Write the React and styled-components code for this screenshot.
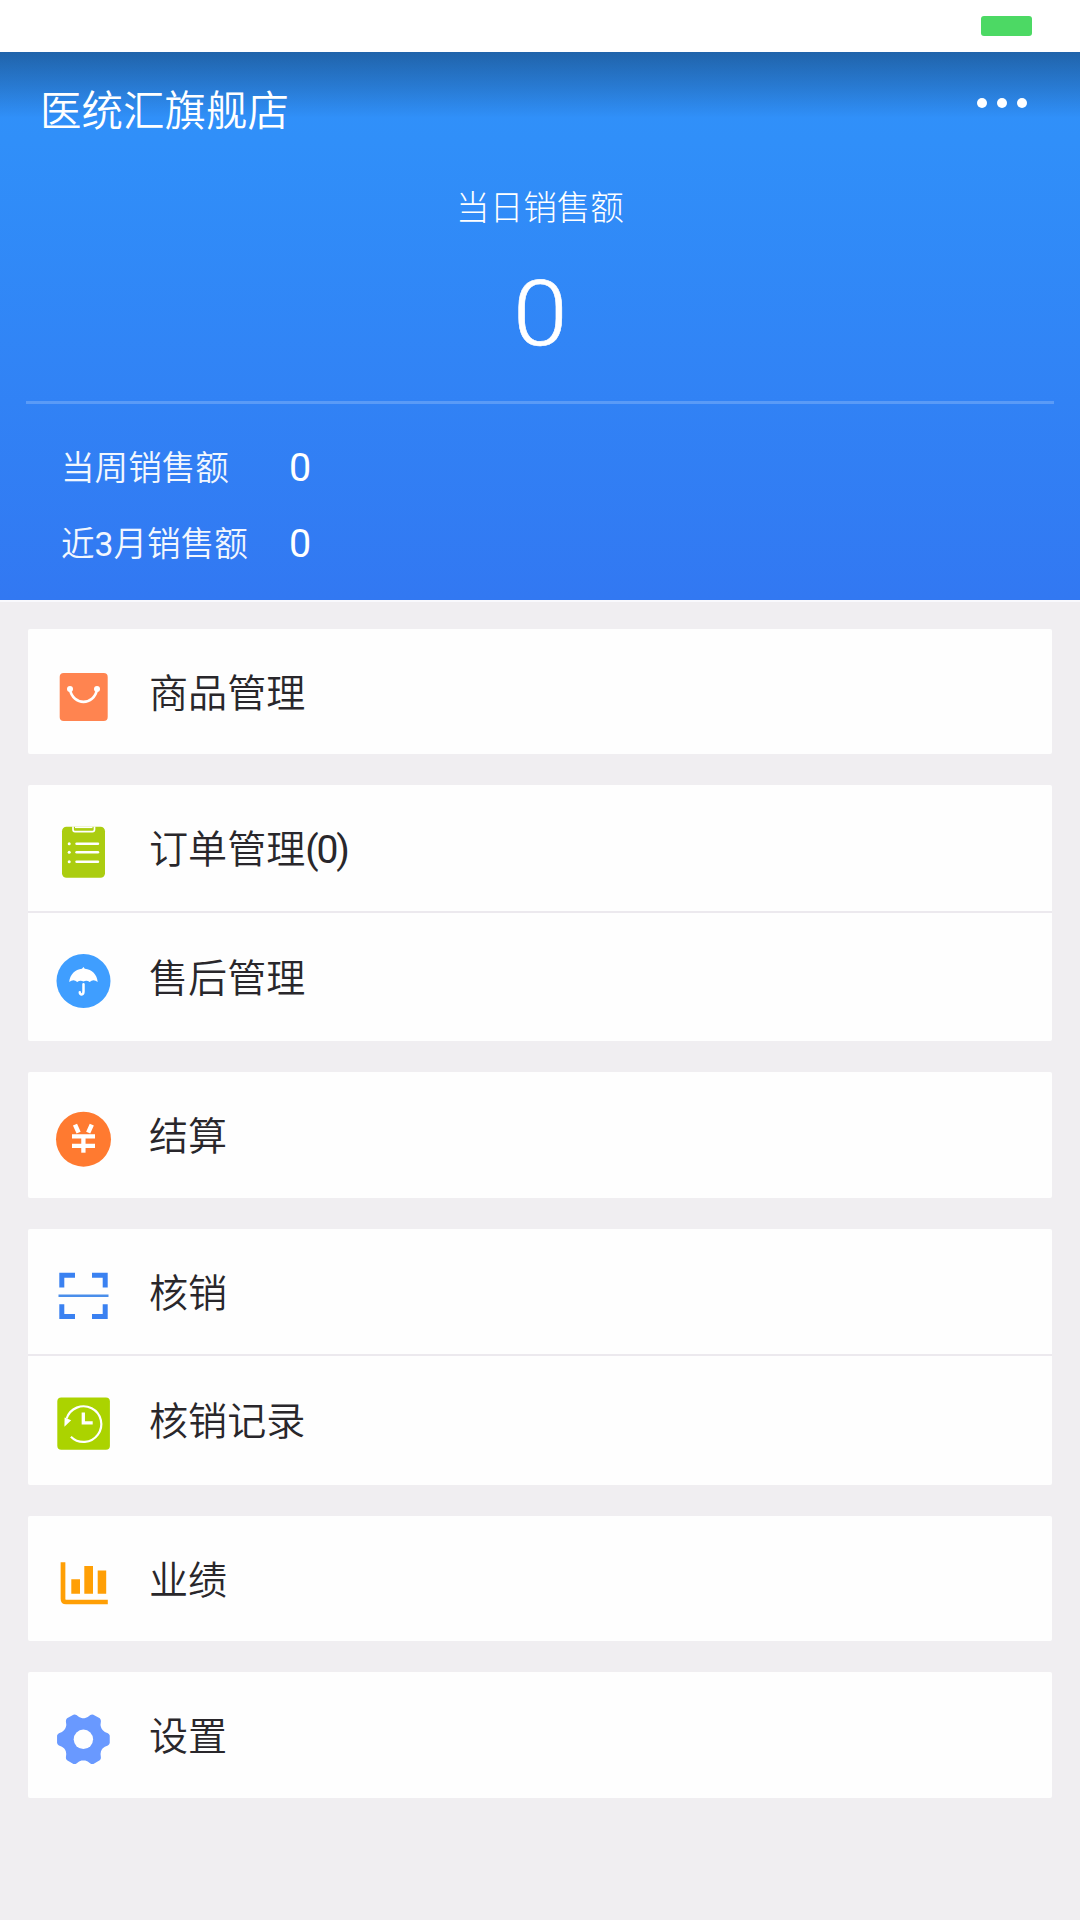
import { Fragment } from "react";
import { createGlobalStyle, styled } from "styled-components";

const GlobalStyle = createGlobalStyle`
  * {
    box-sizing: border-box;
  }
  body {
    margin: 0;
    background-color: #f0eef1;
    font-family: Roboto, "Noto Sans CJK SC", sans-serif;
  }
`;

const Page = styled.div`
  display: flex;
  flex-direction: column;
  width: 1080px;
  height: 1920px;
  overflow: hidden;
`;

const StatusBar = styled.div`
  display: flex;
  justify-content: flex-end;
  height: 52px;
  padding: 16px 48px 0 0;
  background-color: white;
`;

const Battery = styled.div`
  width: 51px;
  height: 20px;
  border-radius: 3px;
  background-color: #4cd964;
`;

const Header = styled.header`
  display: flex;
  flex-direction: column;
  height: 550px;
  color: white;
  border-bottom: 2px solid #f9f9fd;
  background: linear-gradient(
      to bottom,
      rgba(10, 35, 60, 0.42) 0px,
      rgba(10, 35, 60, 0.2) 36px,
      rgba(10, 35, 60, 0) 66px
    ),
    linear-gradient(to bottom, #3092fa 0px, #308ff9 90px, #3278f2 548px);
`;

const TopBar = styled.div`
  display: flex;
  justify-content: space-between;
  height: 118px;
  padding: 29px 53px 0 40px;
`;

const ShopName = styled.h1`
  margin: 0;
  font-size: 41.5px;
  line-height: 62px;
  font-weight: 350;
`;

const MoreButton = styled.div`
  display: flex;
  gap: 9.5px;
  padding-top: 17px;

  span {
    width: 10.4px;
    height: 10.4px;
    border-radius: 50%;
    background-color: white;
  }
`;

const Today = styled.div`
  display: flex;
  flex-direction: column;
  align-items: center;
  height: 234px;
  margin: 0 26px;
  padding-top: 14px;
  border-bottom: 3px solid rgba(255, 255, 255, 0.2);
`;

const TodayLabel = styled.span`
  font-size: 33.6px;
  line-height: 50px;
  font-weight: 300;
`;

const TodayValue = styled.strong`
  margin-top: 30px;
  font-size: 91px;
  line-height: 100px;
  font-weight: 300;
  transform: scaleX(1.08);
  -webkit-text-stroke: 0.6px white;
`;

const Stats = styled.div`
  display: grid;
  grid-template-columns: 228px auto;
  grid-auto-rows: 76px;
  align-items: center;
  padding: 26px 0 0 61px;
`;

const StatLabel = styled.span`
  padding-top: 2px;
  font-size: 33.6px;
  line-height: 50px;
  font-weight: 350;
  opacity: 0.94;
`;

const StatValue = styled.span`
  font-size: 39.5px;
  line-height: 50px;
`;

const Digits = styled.span`
  font-weight: 400;
  letter-spacing: ${(props) => props.$spacing || "0"};
`;

const Menu = styled.main`
  display: flex;
  flex-direction: column;
  gap: 31px;
  padding: 27px 28px 0;
`;

const Group = styled.div`
  display: flex;
  flex-direction: column;
  border-radius: 2px;
  background-color: #fefefe;
`;

const Row = styled.div`
  display: flex;
  gap: 38px;
  height: 125.4px;
  padding: 40px 27px 0;

  & + & {
    height: 130.6px;
    border-top: 2px solid #ece9ee;
    padding-top: 41px;
  }

  svg {
    flex: none;
    overflow: visible;
  }
`;

const RowText = styled.span`
  margin-top: -4px;
  color: #29272b;
  font-size: 39.1px;
  line-height: 58px;
  font-weight: 350;
`;

function Icon({ children }) {
  return (
    <svg width="56" height="56" viewBox="0 0 56 56" fill="none">
      {children}
    </svg>
  );
}

function BagIcon() {
  return (
    <Icon>
      <rect x="4.7" y="4" width="48" height="48" rx="4" fill="#ff8450" />
      <path d="M15 20.5C18 37 39 37 42 20.5" stroke="white" strokeWidth="2.6" />
      <circle cx="15" cy="20" r="3" fill="white" />
      <circle cx="42" cy="20" r="3" fill="white" />
    </Icon>
  );
}

function OrderIcon() {
  return (
    <Icon>
      <rect x="7" y="1.8" width="43" height="51" rx="4.5" fill="#abcd10" />
      <path
        d="M18 1.5V4.5Q18 6.6 20 6.6H37.5Q39.5 6.6 39.5 4.5V1.5"
        stroke="white"
        strokeWidth="1.7"
      />
      <path d="M20 2.4H37.5" stroke="white" strokeWidth="1.4" />
      {[18.8, 27.3, 36.8].map((y) => (
        <Fragment key={y}>
          <circle cx="14.2" cy={y} r="1.5" fill="white" />
          <path
            d={`M21.5 ${y}H43`}
            stroke="white"
            strokeWidth="2.4"
            strokeLinecap="round"
          />
        </Fragment>
      ))}
    </Icon>
  );
}

function UmbrellaIcon() {
  return (
    <Icon>
      <circle cx="28.5" cy="27" r="27" fill="#3f9eff" />
      <path
        d="M28.4 13L29.8 14.8C37 15.6 42 20.5 42.7 28Q38.3 24.5 34.7 28Q31.8 25.6 28.4 27.4Q25.2 25.6 22.2 28Q18.6 24.5 14.2 28C15 20.5 20 15.6 27 14.8Z"
        fill="white"
      />
      <path
        d="M28.5 30.2V37.6C28.5 41.5 24.8 41.3 24.8 38.3"
        stroke="white"
        strokeWidth="2.5"
        strokeLinecap="round"
      />
    </Icon>
  );
}

function YuanIcon() {
  return (
    <Icon>
      <circle cx="28.5" cy="27.2" r="27.5" fill="#ff7a30" />
      <path
        d="M20 12.6L23.6 20.6M36.8 12.6L33.2 20.6"
        stroke="white"
        strokeWidth="4.5"
      />
      <path d="M17 24.3H40M17 33.9H40" stroke="white" strokeWidth="4.3" />
      <path d="M28.4 23V40.7" stroke="white" strokeWidth="4.3" />
    </Icon>
  );
}

function ScanIcon() {
  return (
    <Icon>
      <path
        d="M6.8 18.4V6.2H20M37 6.2H50.2V18.4M6.8 35.3V47.6H20M37 47.6H50.2V35.3"
        stroke="#3a81f1"
        strokeWidth="5"
      />
      <path d="M3.5 26.8H53.5" stroke="#4a8eea" strokeWidth="2.4" />
    </Icon>
  );
}

function HistoryIcon() {
  return (
    <Icon>
      <rect x="2.3" y="0.4" width="52.6" height="52.4" rx="4" fill="#abd300" />
      <path
        d="M11.6 21.5A17.8 17.8 0 1 1 15.9 39.7"
        stroke="white"
        strokeWidth="2.2"
      />
      <path d="M9.6 20.5L16.2 23.2L9.4 29.8Z" fill="white" />
      <path d="M28.3 15.5V25.9H37.7" stroke="white" strokeWidth="3.3" />
    </Icon>
  );
}

function ChartIcon() {
  return (
    <Icon>
      <path d="M8 6.2V43Q8 46 11 46H52.8" stroke="#ff9f05" strokeWidth="4.7" />
      <path
        d="M16.3 23.2H25V37.8H16.3ZM29.3 10H38V37.8H29.3ZM42.7 14.5H51.2V37.8H42.7Z"
        fill="#ff9f05"
      />
    </Icon>
  );
}

const polar = (deg, r) => {
  const a = (deg * Math.PI) / 180;
  return `${(28.4 + r * Math.cos(a)).toFixed(2)} ${(27.3 + r * Math.sin(a)).toFixed(2)}`;
};

// one tooth and the notch that follows it
const tooth = (deg) =>
  `L${polar(deg - 8, 26.6)}L${polar(deg + 8, 26.6)}` +
  `Q${polar(deg + 12, 26.4)} ${polar(deg + 14, 25.2)}` +
  `Q${polar(deg + 19, 22.2)} ${polar(deg + 25, 21.4)}` +
  `Q${polar(deg + 30, 20.9)} ${polar(deg + 35, 21.4)}` +
  `Q${polar(deg + 41, 22.2)} ${polar(deg + 46, 25.2)}` +
  `Q${polar(deg + 48, 26.4)} ${polar(deg + 52, 26.6)}`;

function GearIcon() {
  const teeth = [0, 60, 120, 180, 240, 300].map(tooth).join("");
  return (
    <Icon>
      <path d={`M${polar(-8, 26.6)}${teeth}Z`} fill="#6999ff" />
      <circle cx="28.4" cy="27.3" r="9.7" fill="#fefefe" />
    </Icon>
  );
}

const groups = [
  [{ text: "商品管理", icon: BagIcon }],
  [
    { text: "订单管理", count: 0, icon: OrderIcon },
    { text: "售后管理", icon: UmbrellaIcon },
  ],
  [{ text: "结算", icon: YuanIcon }],
  [
    { text: "核销", icon: ScanIcon },
    { text: "核销记录", icon: HistoryIcon },
  ],
  [{ text: "业绩", icon: ChartIcon }],
  [{ text: "设置", icon: GearIcon }],
];

function App() {
  return (
    <Page>
      <GlobalStyle />
      <StatusBar>
        <Battery />
      </StatusBar>
      <Header>
        <TopBar>
          <ShopName>医统汇旗舰店</ShopName>
          <MoreButton>
            <span />
            <span />
            <span />
          </MoreButton>
        </TopBar>
        <Today>
          <TodayLabel>当日销售额</TodayLabel>
          <TodayValue>0</TodayValue>
        </Today>
        <Stats>
          <StatLabel>当周销售额</StatLabel>
          <StatValue>0</StatValue>
          <StatLabel>
            近<Digits>3</Digits>月销售额
          </StatLabel>
          <StatValue>0</StatValue>
        </Stats>
      </Header>
      <Menu>
        {groups.map((rows) => (
          <Group key={rows[0].text}>
            {rows.map((row) => (
              <Row key={row.text}>
                <row.icon />
                <RowText>
                  {row.text}
                  {row.count !== undefined && (
                    <Digits $spacing="-2.2px">({row.count})</Digits>
                  )}
                </RowText>
              </Row>
            ))}
          </Group>
        ))}
      </Menu>
    </Page>
  );
}

export default App;
